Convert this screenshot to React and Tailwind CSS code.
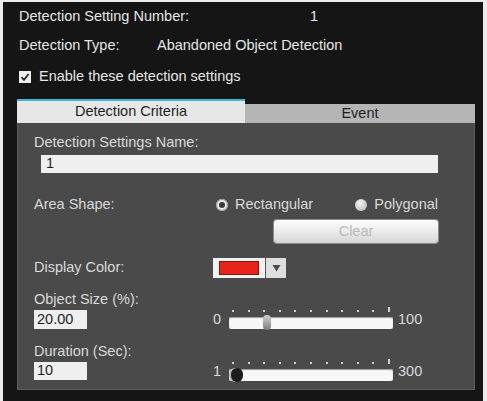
import React from 'react';

const font = { fontFamily: '"Liberation Sans", Arial, sans-serif' };

function Radio({ checked, label }) {
  return (
    <div className="flex items-center gap-[7px]">
      {checked ? (
        <span className="flex h-[12px] w-[12px] items-center justify-center rounded-full bg-[#e8e8e8] shadow-[inset_0_0_0_1px_#9a9a9a]">
          <span className="h-[6px] w-[6px] rounded-full bg-[#3a3a3a]" />
        </span>
      ) : (
        <span className="h-[12px] w-[12px] rounded-full bg-[radial-gradient(circle_at_40%_35%,#f4f4f4,#b0b0b0)]" />
      )}
      <span>{label}</span>
    </div>
  );
}

function Slider({ min, max, pos, dark }) {
  const ticks = Array.from({ length: 11 });
  return (
    <div className="flex items-end">
      <span className="mb-[-2px] w-[16px]">{min}</span>
      <div className="flex w-[164px] flex-col">
        <div className="flex justify-between px-[3px] pb-[5px]">
          {ticks.map((_, i) => (
            <span key={i} className={`w-[2px] bg-[#cfcfcf] ${i === 10 ? 'h-[5px]' : 'h-[2px]'} self-end`} />
          ))}
        </div>
        <div className="relative h-[12px] rounded-[2px] bg-[#f7f7f7] shadow-[inset_0_1px_1px_#999]">
          {dark ? (
            <span
              className="absolute top-[-1px] h-[14px] w-[12px] rounded-full bg-[#1c1c1c] shadow-[-2px_0_0_#bbb]"
              style={{ left: pos }}
            />
          ) : (
            <span
              className="absolute top-[-2px] h-[15px] w-[8px] rounded-[4px] bg-[linear-gradient(#d0d0d0,#7d7d7d)]"
              style={{ left: pos }}
            />
          )}
        </div>
      </div>
      <span className="mb-[-2px] ml-[5px]">{max}</span>
    </div>
  );
}

export default function App() {
  return (
    <div className="h-[401px] w-[487px] bg-[#ececec] pl-[3px] pr-[4px] pt-[2px]" style={font}>
      <div className="flex h-full flex-col bg-[#151515] pl-[14px] pr-[8px] text-[14.5px] text-[#e6e6e6]">
        <div className="mt-[5px] flex h-[20px] items-center pl-[2px]">
          <span className="w-[291px]">Detection Setting Number:</span>
          <span>1</span>
        </div>
        <div className="mt-[9px] flex h-[20px] items-center pl-[2px]">
          <span className="w-[138px]">Detection Type:</span>
          <span>Abandoned Object Detection</span>
        </div>
        <div className="mt-[11px] flex h-[20px] items-center gap-[8px] pl-[2px]">
          <span className="flex h-[12px] w-[12px] items-center justify-center bg-[#f0f0f0]">
            <svg width="10" height="10" viewBox="0 0 10 10">
              <path d="M1.5 5.2 L4 7.8 L8.6 2" fill="none" stroke="#2a2a2a" strokeWidth="1.8" />
            </svg>
          </span>
          <span>Enable these detection settings</span>
        </div>

        <div className="mt-[12px] flex flex-col">
          <div className="flex h-[24px] items-end">
            <div className="flex h-[24px] w-[228px] items-center justify-center border-t-2 border-[#3fb6d6] bg-[#e7e7e7] text-[#1e1e1e]">
              Detection Criteria
            </div>
            <div className="flex h-[19px] flex-1 items-center justify-center bg-[#b5b5b5] text-[#1e1e1e]">
              Event
            </div>
          </div>

          <div className="flex h-[267px] flex-col border border-t-0 border-[#5c5c5c] bg-[#4a4a4a] pl-[16px] pr-[36px] text-[#d9d9d9]">
            <div className="mt-[10px] flex h-[20px] items-center">Detection Settings Name:</div>
            <div className="ml-[7px] mt-[2px] flex h-[18px] items-center bg-[#efefef] pl-[5px] text-[#1e1e1e]">1</div>

            <div className="mt-[22px] flex h-[20px] items-center">
              <span className="w-[182px]">Area Shape:</span>
              <Radio checked label="Rectangular" />
              <div className="ml-auto">
                <Radio label="Polygonal" />
              </div>
            </div>
            <div className="mt-[5px] flex justify-end">
              <div className="flex h-[23px] w-[164px] items-center justify-center rounded-[3px] bg-[linear-gradient(#ffffff,#d6d6d6)] text-[#b9b9b9] shadow-[0_0_0_1px_#8c8c8c]">
                Clear
              </div>
            </div>

            <div className="mt-[15px] flex h-[20px] items-center">
              <span className="w-[179px]">Display Color:</span>
              <div className="flex h-[20px] items-center bg-[#f2f2f2]">
                <div className="flex h-full w-[53px] items-center justify-center border-r border-[#555]">
                  <span className="h-[14px] w-[40px] border border-[#7a1a12] bg-[#e6241a]" />
                </div>
                <div className="flex h-full w-[20px] items-center justify-center bg-[#dedede]">
                  <svg width="9" height="8" viewBox="0 0 9 8">
                    <path d="M0.5 1 L8.5 1 L4.5 7.5 Z" fill="#4a4a4a" />
                  </svg>
                </div>
              </div>
            </div>

            <div className="mt-[12px] flex">
              <div className="flex w-[179px] flex-col">
                <div className="flex h-[20px] items-center">Object Size (%):</div>
                <div className="flex h-[19px] w-[53px] items-center bg-[#efefef] pl-[3px] text-[#1e1e1e]">20.00</div>
              </div>
              <div className="mt-[17px]">
                <Slider min="0" max="100" pos={34} />
              </div>
            </div>

            <div className="mt-[13px] flex">
              <div className="flex w-[179px] flex-col">
                <div className="flex h-[20px] items-center">Duration (Sec):</div>
                <div className="flex h-[18px] w-[53px] items-center bg-[#efefef] pl-[3px] text-[#1e1e1e]">10</div>
              </div>
              <div className="mt-[17px]">
                <Slider min="1" max="300" pos={2} dark />
              </div>
            </div>
          </div>
        </div>
      </div>
    </div>
  );
}
